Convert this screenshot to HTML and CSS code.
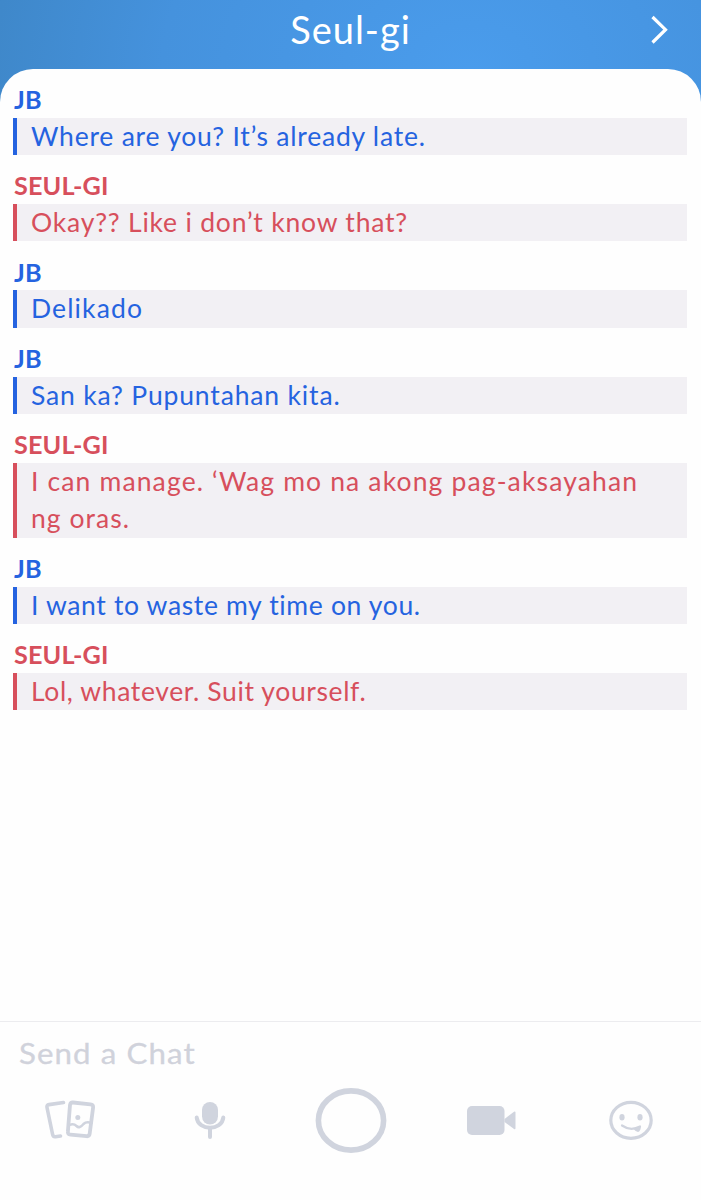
FILE: index.html
```html
<!DOCTYPE html>
<html lang="en">
<head>
<meta charset="utf-8">
<title>Seul-gi</title>
<link rel="stylesheet" href="styles.css">
</head>
<body>
<header class="header">
  <h1 class="title">Seul-gi</h1>
  <svg class="chevron" width="20" height="32" viewBox="0 0 20 32"><path d="M2.5 3 15.5 15.7 2.5 28.5" fill="none" stroke="#fff" stroke-width="3.2"/></svg>
</header>
<main class="chat">
  <section class="message jb"><h2 class="sender">JB</h2><p class="text"><span class="t1">Where are you? It’s already late.</span></p></section>
  <section class="message seulgi"><h2 class="sender">SEUL-GI</h2><p class="text"><span class="t2">Okay?? Like i don’t know that?</span></p></section>
  <section class="message jb"><h2 class="sender">JB</h2><p class="text"><span class="t3">Delikado</span></p></section>
  <section class="message jb"><h2 class="sender">JB</h2><p class="text"><span class="t4">San ka? Pupuntahan kita.</span></p></section>
  <section class="message seulgi"><h2 class="sender">SEUL-GI</h2><p class="text"><span class="t5">I can manage. ‘Wag mo na akong pag-aksayahan</span><br><span class="t6">ng oras.</span></p></section>
  <section class="message jb"><h2 class="sender">JB</h2><p class="text"><span class="t7">I want to waste my time on you.</span></p></section>
  <section class="message seulgi"><h2 class="sender">SEUL-GI</h2><p class="text"><span class="t8">Lol, whatever. Suit yourself.</span></p></section>
</main>
<footer class="composer">
  <div class="placeholder">Send a Chat</div>
  <nav class="tools">
    <svg width="100" height="70" viewBox="-10.5 0 100 70" fill="none" stroke="#d0d4de" stroke-linecap="round" stroke-linejoin="round">
      <path d="M33 17.5 18.5 19.6Q16 20 16.5 22.500L22 49Q22.500 52 25 51.700L30 51" stroke-width="3.600"/>
      <path d="M42.500 17.500 60 19.300Q63 19.700 62.600 22.500L59.200 48.500Q58.800 51.500 56 51.200L40 49.700Q37 49.400 37.400 46.500L39.500 20Q40 17.300 42.500 17.500Z" stroke-width="3.800"/>
      <path d="M39 40Q43 38 46 41Q49 44 53 39Q56 36 61 38" stroke-width="2.500"/>
      <circle cx="47.300" cy="32.500" r="2.500" fill="#d0d4de" stroke="none"/>
    </svg>
    <svg width="100" height="70" viewBox="0 0 100 70">
      <rect x="42" y="17" width="16" height="22.500" rx="8" fill="#d0d4de"/>
      <path d="M36.700 32.500C38 46 62 46 63.300 32.500M50 43V52" fill="none" stroke="#d0d4de" stroke-width="4" stroke-linecap="round"/>
    </svg>
    <svg width="100" height="70" viewBox="0 0 100 70"><ellipse cx="50" cy="35.500" rx="32.600" ry="29.600" fill="none" stroke="#d0d4de" stroke-width="5.600"/></svg>
    <svg width="100" height="70" viewBox="0 0 100 70" fill="#d0d4de"><rect x="26" y="21" width="37.500" height="29" rx="5"/><path d="M63.500 34 73 26.700Q74.500 26 74.500 27.700V43Q74.500 44.700 73 44L63.500 37Z"/></svg>
    <svg width="100" height="70" viewBox="0 0 100 70" fill="none" stroke="#d0d4de">
      <ellipse cx="50" cy="35.300" rx="20.200" ry="18" stroke-width="3.200"/>
      <ellipse cx="41" cy="32.300" rx="2.600" ry="3.200" fill="#d0d4de" stroke="none"/>
      <ellipse cx="59" cy="32.300" rx="2.600" ry="3.200" fill="#d0d4de" stroke="none"/>
      <path d="M41 40.500Q49.500 46.500 59 41.500" stroke-width="2.200" stroke-linecap="round"/>
      <path d="M52.500 44 60 41.300Q59.500 46.500 57 47Q55 47 52.500 44Z" fill="#d0d4de" stroke="none"/>
    </svg>
  </nav>
</footer>
</body>
</html>
```
FILE: styles.css
```css
* { box-sizing: border-box; }
body {
  margin: 0;
  height: 1200px;
  display: flex;
  flex-direction: column;
  overflow: hidden;
  font-family: Lato, "Open Sans", sans-serif;
  background: radial-gradient(ellipse 560px 420px at 470px 70px, #4a9cec 0%, #4592dd 55%, #3f88ca 85%, #3e86c6 100%);
}
.header {
  height: 69px;
  flex: none;
  display: grid;
  grid-template-columns: 1fr auto 1fr;
  align-items: start;
}
.title {
  grid-column: 2;
  margin: 6px 0 0;
  font-size: 38px;
  line-height: 46px;
  font-weight: 400;
  letter-spacing: 1px;
  color: #fff;
}
.chevron { justify-self: end; margin: 14px 31px 0 0; }
.chat {
  flex: 1;
  background: #fefefe;
  border-radius: 33px 33px 0 0;
  padding: 12px 14px 0 13px;
}
.message { margin-bottom: 12.330px; }
.sender {
  margin: 0;
  padding-left: 1px;
  font-size: 25.200px;
  line-height: 37px;
  height: 36.750px;
  font-weight: 700;
  letter-spacing: .15px;
}
.text {
  margin: 0;
  padding-left: 14px;
  border-left: 4px solid;
  background: linear-gradient(#f2f0f4, #f2f0f4) padding-box;
  font-size: 26.500px;
  line-height: 37.250px;
  white-space: nowrap;
  font-variant-ligatures: none;
}
.t1 { letter-spacing: .78px; }
.t2 { letter-spacing: .8px; }
.t3 { letter-spacing: 1.130px; }
.t4 { letter-spacing: .84px; }
.t5 { letter-spacing: 1.140px; }
.t6 { letter-spacing: 1.050px; }
.t7 { letter-spacing: .65px; }
.t8 { letter-spacing: .63px; }
.jb { color: #2563e0; }
.seulgi { color: #d74f5c; }
.composer {
  flex: none;
  height: 179px;
  background: #fefefe;
  border-top: 1px solid #ececef;
}
.placeholder {
  margin-left: 19px;
  padding-top: 13px;
  width: 200px;
  font-size: 28px;
  line-height: 36px;
  letter-spacing: 1px;
  color: #d0d2db;
  -webkit-text-stroke: .3px #d0d2db;
  transform: scaleX(1.115);
  transform-origin: left;
}
.tools {
  display: flex;
  justify-content: space-between;
  padding: 14px 20px 0;
}
.tools svg { flex: none; display: block; }
```
